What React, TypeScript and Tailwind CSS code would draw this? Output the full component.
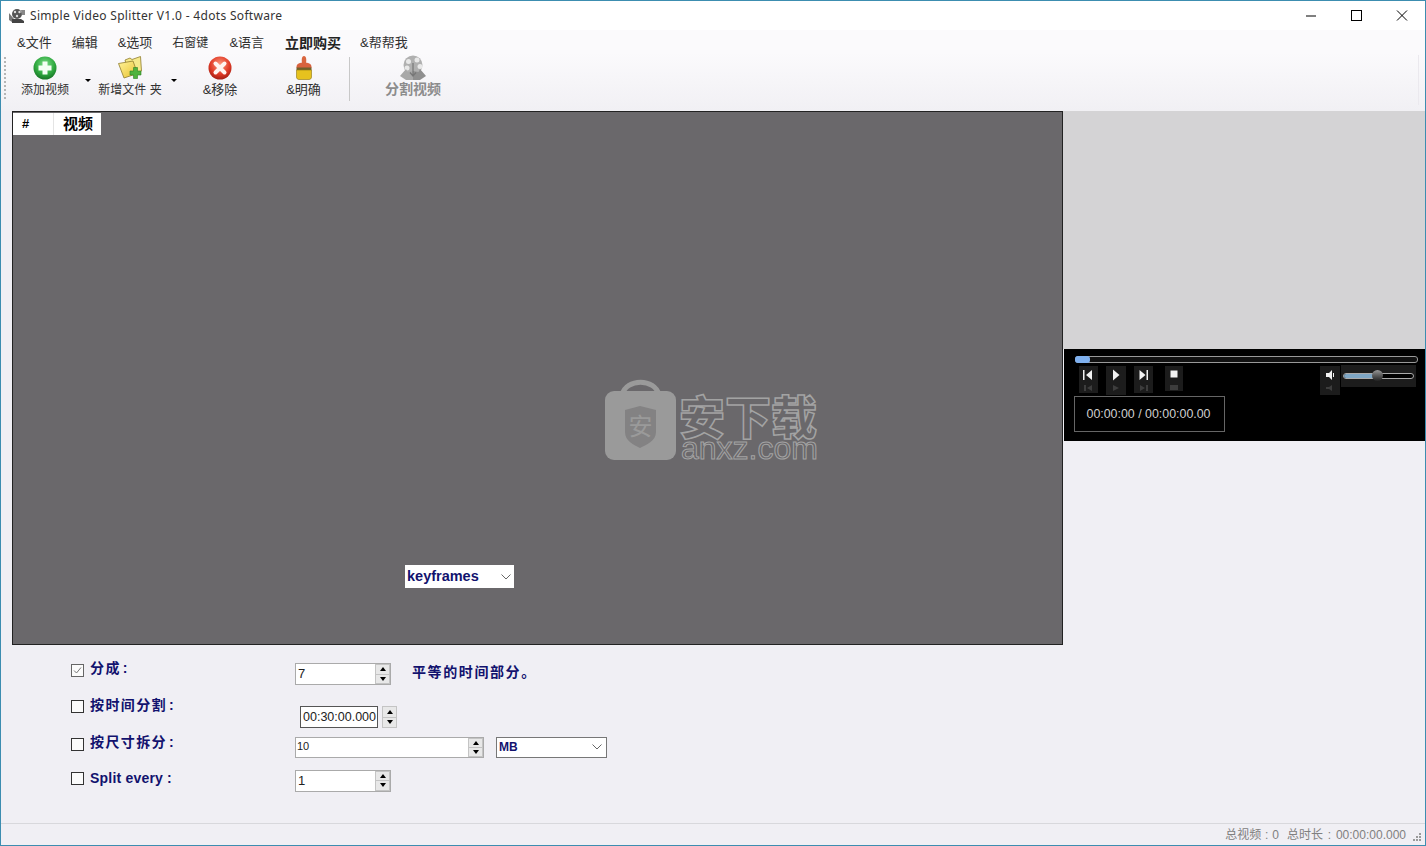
import React from "react";

const cjk = "font-['Liberation_Sans','Noto_Sans_CJK_SC',sans-serif]";

function AddIcon() {
  return (
    <svg width="26" height="26" viewBox="0 0 26 26">
      <defs>
        <radialGradient id="g1" cx="0.5" cy="0.35" r="0.7">
          <stop offset="0" stopColor="#7fe08a" />
          <stop offset="0.6" stopColor="#2fa83f" />
          <stop offset="1" stopColor="#146b22" />
        </radialGradient>
      </defs>
      <circle cx="13" cy="13" r="11.5" fill="url(#g1)" />
      <path d="M10.500 6.500h5v4h4v5h-4v4h-5v-4h-4v-5h4z" fill="#f4fff4" />
    </svg>
  );
}

function FolderIcon() {
  return (
    <svg width="26" height="26" viewBox="0 0 26 26">
      <defs>
        <linearGradient id="g2" x1="0" y1="0" x2="1" y2="1">
          <stop offset="0" stopColor="#fff39a" />
          <stop offset="1" stopColor="#e8c02c" />
        </linearGradient>
      </defs>
      <path d="M8 5 L13 3 L15 4.500 L23.500 1.500 L24.500 16 L12 20z" fill="#f6e98a" stroke="#8f7c2e" strokeWidth="0.8" />
      <path d="M1.500 8.500 L16 6 L20.500 18.500 L7 23z" fill="url(#g2)" stroke="#8f7c2e" strokeWidth="0.8" />
      <path d="M16.500 12.500h4v3.500h3.500v4h-3.500v3.500h-4V20H13v-4h3.500z" fill="#4fb33d" stroke="#2d7f24" strokeWidth="0.6" />
    </svg>
  );
}

function RemoveIcon() {
  return (
    <svg width="26" height="26" viewBox="0 0 26 26">
      <defs>
        <radialGradient id="g3" cx="0.5" cy="0.35" r="0.7">
          <stop offset="0" stopColor="#ff9c80" />
          <stop offset="0.6" stopColor="#e03a26" />
          <stop offset="1" stopColor="#98180f" />
        </radialGradient>
      </defs>
      <circle cx="13" cy="13" r="11.5" fill="url(#g3)" />
      <path d="M8.500 8.500 L17.500 17.500 M17.500 8.500 L8.500 17.500" stroke="#fff3ef" strokeWidth="4" strokeLinecap="round" />
    </svg>
  );
}

function BrushIcon() {
  return (
    <svg width="26" height="26" viewBox="0 0 26 26">
      <path d="M11 8 C10.500 5 10.500 1 13 1 C15.500 1 15.500 5 15 8z" fill="#d9663f" />
      <path d="M5.500 12 C5.500 8.500 9 7.500 13 7.500 C17 7.500 20.500 8.500 20.500 12 V13 H5.500z" fill="#d8623e" />
      <rect x="5.500" y="12.500" width="15" height="2.500" fill="#6f5f2a" />
      <path d="M5.500 15h15v7c0 1.500-1 2.500-2.500 2.500H8c-1.500 0-2.500-1-2.500-2.500z" fill="#e6c21e" stroke="#8f7510" strokeWidth="0.6" />
    </svg>
  );
}

function SplitIcon() {
  return (
    <svg width="28" height="26" viewBox="0 0 28 26">
      <circle cx="14" cy="10" r="9.500" fill="#b0b0b0" />
      <circle cx="9.500" cy="6.500" r="2.500" fill="#e8e8e8" />
      <circle cx="18" cy="5" r="2.500" fill="#e8e8e8" />
      <circle cx="21" cy="11.500" r="2.500" fill="#e8e8e8" />
      <circle cx="8" cy="13" r="2.500" fill="#e8e8e8" />
      <path d="M1 21 L7 14 L8.500 17 L14 16 V25 H7z" fill="#a8a8a8" />
      <path d="M27 21 L21 14 L19.500 17 L14 16 V25 H21z" fill="#8f8f8f" />
      <path d="M14 8v13M11 17.500L14 21l3-3.500" fill="none" stroke="#777" strokeWidth="1.200" />
    </svg>
  );
}

function Caret() {
  return <div className="w-0 h-0 border-x-[3px] border-x-transparent border-t-[3px] border-t-black" />;
}

function ToolButton({ w, icon, label, cls }: { w: string; icon: React.ReactNode; label: string; cls?: string }) {
  return (
    <div className={`${w} h-full flex flex-col items-center shrink-0`}>
      <div className="h-[28px] mt-[1px] flex items-center justify-center">{icon}</div>
      <div className={`leading-[16px] whitespace-nowrap ${cls ?? "text-[12px] text-[#303030]"}`}>{label}</div>
    </div>
  );
}

function Spin() {
  return (
    <div className="w-[15px] h-full flex flex-col shrink-0 gap-[1px] p-[1px] bg-[#c4c4c4]">
      <div className="flex-1 bg-[#e8e8e8] flex items-center justify-center">
        <div className="w-0 h-0 border-x-[3.5px] border-x-transparent border-b-[4px] border-b-black" />
      </div>
      <div className="flex-1 bg-[#e8e8e8] flex items-center justify-center">
        <div className="w-0 h-0 border-x-[3.5px] border-x-transparent border-t-[4px] border-t-black" />
      </div>
    </div>
  );
}

function Check({ on }: { on?: boolean }) {
  return (
    <div className={`w-[13px] h-[13px] border shrink-0 bg-[#fbfbfb] flex items-center justify-center ${on ? "border-[#666]" : "border-[#333]"}`}>
      {on && (
        <svg width="11" height="11" viewBox="0 0 11 11">
          <path d="M2 5.500 L4.500 8 L9 2.500" fill="none" stroke="#777" strokeWidth="1" />
        </svg>
      )}
    </div>
  );
}

function Label({ children, latin, cls }: { children: React.ReactNode; latin?: boolean; cls?: string }) {
  return (
    <div
      className={`w-[211px] pl-[6px] font-bold text-[#12126e] whitespace-pre ${latin ? "text-[14px] tracking-[0.200px]" : "text-[14px] tracking-[1.400px]"} ${cls ?? ""}`}
    >
      {children}
    </div>
  );
}

function PlayerBtn({ w, h, ml, children }: { w: string; h: string; ml: string; children: React.ReactNode }) {
  return (
    <div className={`${w} ${h} ${ml} bg-[#1c1c1c] flex flex-col items-center pt-[3px] gap-[4px] shrink-0`}>{children}</div>
  );
}

function Glyph({ d }: { d: string }) {
  return (
    <svg width="12" height="12" viewBox="0 0 12 12">
      <path d={d} fill="#f2f2f2" />
    </svg>
  );
}

const PREV = "M0 1h1.500v10H0z M9 1v10L3 6z";
const PLAY = "M3 0.500 L9.500 6 L3 11.500z";
const NEXT = "M1.500 1v10l6-5z M8.500 1h1.500v10H8.500z";
const STOP = "M2.500 1.500h7v7h-7z";
const MUTE = "M2 4h3l3-3v10L5 8H2z M9 4h1v4H9z";

export default function App() {
  return (
    <div className={`w-[1426px] h-[846px] overflow-hidden flex flex-col border border-[#3c8db0] bg-[#f0eff4] ${cjk}`}>
      {/* title bar */}
      <div className="h-[29px] shrink-0 bg-white flex items-center">
        <svg width="18" height="16" viewBox="0 0 18 16" className="ml-[7px] shrink-0">
          <circle cx="9" cy="6" r="5" fill="#555" />
          <circle cx="7" cy="4" r="1.200" fill="#ddd" />
          <circle cx="11.500" cy="4" r="1.200" fill="#ddd" />
          <circle cx="9" cy="8" r="1.200" fill="#ddd" />
          <path d="M1 5l5 6-2 3-3-2z" fill="#777" />
          <path d="M4 11h9l3 2v2H4z" fill="#444" />
          <path d="M13 2h4v5h-3z" fill="#888" />
        </svg>
        <div className="ml-[4px] text-[12px] tracking-[0.320px] text-[#333] font-['Noto_Sans',sans-serif] whitespace-nowrap">
          Simple Video Splitter V1.0 - 4dots Software
        </div>
        <div className="ml-auto flex items-center h-full">
          <svg width="46" height="29" viewBox="0 0 46 29">
            <path d="M18 15h10" stroke="#000" strokeWidth="1" />
          </svg>
          <svg width="46" height="29" viewBox="0 0 46 29">
            <rect x="17.500" y="9.500" width="10" height="10" fill="none" stroke="#000" strokeWidth="1" />
          </svg>
          <svg width="45" height="29" viewBox="0 0 45 29">
            <path d="M17 9.500 L27 19.500 M27 9.500 L17 19.500" stroke="#000" strokeWidth="1" />
          </svg>
        </div>
      </div>

      {/* menu bar */}
      <div className="h-[23px] shrink-0 bg-[#fbfafc] flex items-center pt-[3px] pl-[16px] gap-[20px] text-[13px] text-[#303030] whitespace-nowrap">
        <span>&amp;文件</span>
        <span>编辑</span>
        <span>&amp;选项</span>
        <span className="text-[12px]">右窗键</span>
        <span className="ml-[1px]">&amp;语言</span>
        <span className="ml-[1px] text-[14px] font-bold text-[#222]">立即购买</span>
        <span className="-ml-[1px]">&amp;帮帮我</span>
      </div>

      {/* toolbar */}
      <div className="h-[58px] shrink-0 bg-gradient-to-b from-[#fbfafc] to-[#f1f0f4] flex items-start relative">
        <div className="w-[7px] h-full pt-[4px] pl-[3px] shrink-0">
          <div className="h-[42px] border-l-2 border-dotted border-[#b5b5b5]" />
        </div>
        <ToolButton w="w-[74px]" icon={<AddIcon />} label="添加视频" />
        <div className="w-[14px] pt-[26px] pl-[3px] shrink-0">
          <Caret />
        </div>
        <ToolButton w="w-[68px]" icon={<FolderIcon />} label="新增文件 夹" />
        <div className="w-[20px] pt-[26px] pl-[7px] shrink-0">
          <Caret />
        </div>
        <ToolButton w="w-[72px]" icon={<RemoveIcon />} label="&移除" cls="text-[13px] text-[#303030]" />
        <ToolButton w="w-[93px] pl-[2px]" icon={<BrushIcon />} label="&明确" cls="text-[13px] text-[#303030]" />
        <div className="w-[1px] h-[44px] mt-[4px] bg-[#c8c8c8] shrink-0" />
        <ToolButton w="w-[126px]" icon={<SplitIcon />} label="分割视频" cls="-mt-[1px] text-[14px] font-bold text-[#8c8c8c]" />
        <div className="ml-auto mr-[6px] mt-[2px] w-[1px] h-[50px] bg-[#ebe9ee]" />
      </div>

      {/* main */}
      <div className="h-[534px] shrink-0 flex pl-[11px]">
        <div className="relative w-[1051px] h-full bg-[#6a686b] border border-[#222] shrink-0">
          <div className="w-[88px] h-[22px] mt-[1px] bg-white flex items-center text-black font-bold">
            <div className="w-[41px] h-full pl-[9px] flex items-center text-[13px] border-r border-[#e4e4e4]">#</div>
            <div className="flex-1 pl-[9px] text-[15px]">视频</div>
          </div>

          {/* watermark */}
          <div className="absolute left-[591px] top-[267px] flex">
            <svg width="73" height="82" viewBox="0 0 73 82">
              <path d="M18 16 C22 -1 51 -1 55 16" fill="none" stroke="#9a9a9a" strokeWidth="5" />
              <rect x="1" y="12" width="71" height="69" rx="9" fill="#9a9a9a" />
              <path d="M21 31 L36 27 L52 31 V53 C52 62 42 66 36 69 C30 66 21 62 21 53z" fill="#838283" />
              <text x="36.500" y="56" textAnchor="middle" fontSize="24" fill="#9a9a9a" fontFamily="'Noto Sans CJK SC',sans-serif">安</text>
            </svg>
            <div className="ml-[2px] w-[145px] flex flex-col items-start font-bold">
              <div className="text-[46px] leading-[46px] mt-[12px] whitespace-nowrap font-black text-transparent [-webkit-text-stroke:1.500px_#a3a3a3] font-['Noto_Sans_CJK_SC',sans-serif]">
                安下载
              </div>
              <div className="text-[32px] leading-[22px] ml-[2px] whitespace-nowrap font-normal text-transparent [-webkit-text-stroke:1px_#a3a3a3] font-['Liberation_Sans',sans-serif]">
                anxz.com
              </div>
            </div>
          </div>

          {/* keyframes */}
          <div className="absolute left-[392px] top-[453px] w-[109px] h-[23px] bg-white flex items-center pl-[2px] text-[14.500px] font-bold text-[#12126e]">
            keyframes
            <svg width="10" height="6" viewBox="0 0 10 6" className="ml-auto mr-[3px]">
              <path d="M0.500 0.500 L5 5 L9.500 0.500" fill="none" stroke="#666" strokeWidth="1" />
            </svg>
          </div>
        </div>

        {/* right column */}
        <div className="flex-1 pl-[1px] flex flex-col">
          <div className="h-[238px] bg-[#d4d3d5] -ml-[1px]" />
          <div className="h-[92px] bg-black pl-[11px] pt-[7px]">
            <div className="relative w-[343px] h-[7px] bg-[#111] border border-[#999] rounded-[3px]">
              <div className="absolute -left-[1px] -top-[1px] w-[15px] h-[7px] rounded-[3px] bg-[#7fb0ee]" />
            </div>
            <div className="flex h-[30px] mt-[3px]">
              <PlayerBtn w="w-[19px]" h="h-[27px]" ml="ml-[4px]">
                <Glyph d={PREV} />
                <svg width="12" height="6" viewBox="0 0 12 6"><path d="M1 0h2v6H1z M9 0v6L4 3z" fill="#3d3d3d" /></svg>
              </PlayerBtn>
              <PlayerBtn w="w-[20px]" h="h-[29px]" ml="ml-[8px]">
                <Glyph d={PLAY} />
                <svg width="12" height="6" viewBox="0 0 12 6"><path d="M3 0L9 3L3 6z" fill="#3d3d3d" /></svg>
              </PlayerBtn>
              <PlayerBtn w="w-[19px]" h="h-[27px]" ml="ml-[8px]">
                <Glyph d={NEXT} />
                <svg width="12" height="6" viewBox="0 0 12 6"><path d="M2 0v6l5-3z M8 0h2v6H8z" fill="#3d3d3d" /></svg>
              </PlayerBtn>
              <PlayerBtn w="w-[18px]" h="h-[25px]" ml="ml-[12px]">
                <Glyph d={STOP} />
                <svg width="10" height="5" viewBox="0 0 10 5"><path d="M1 0h8v5H1z" fill="#3d3d3d" /></svg>
              </PlayerBtn>
              <PlayerBtn w="w-[20px]" h="h-[29px]" ml="ml-[137px]">
                <Glyph d={MUTE} />
                <svg width="12" height="6" viewBox="0 0 12 6"><path d="M2 2h3l3-2v6L5 4H2z" fill="#3d3d3d" /></svg>
              </PlayerBtn>
              <div className="relative w-[75px] h-[22px] -mt-[1px] ml-[1px] bg-[#1c1c1c] flex items-center justify-center shrink-0">
                <div className="w-[71px] h-[6px] rounded-[3px] border border-[#aaa] bg-black overflow-hidden">
                  <div className="w-[31px] h-full bg-[#7ea6c4]" />
                </div>
                <div className="absolute left-[31px] top-[5px] w-[11px] h-[11px] rounded-full bg-gradient-to-b from-[#999] to-[#222]" />
              </div>
            </div>
            <div className="w-[151px] h-[36px] -ml-[1px] pt-[1px] pr-[2px] border border-[#666] flex items-center justify-center text-[12.400px] text-[#d0d0d0]">
              00:00:00 / 00:00:00.00
            </div>
          </div>
        </div>
      </div>

      {/* form */}
      <div className="flex-1 pl-[70px] flex flex-col">
        <div className="h-[37px] pt-[14px] flex items-center">
          <Check on />
          <Label cls="-mt-[4px]">分成<span className="ml-[2px]">:</span></Label>
          <div className="w-[96px] h-[22px] mt-[7px] bg-white border border-[#aaa] flex text-[13px] text-[#222] leading-[20px]">
            <div className="flex-1 pl-[2px]">7</div>
            <Spin />
          </div>
          <div className="ml-[21px] mt-[4px] text-[14px] font-bold text-[#12126e] tracking-[1.600px] whitespace-nowrap">平等的时间部分。</div>
        </div>
        <div className="h-[37px] mt-[6px] flex items-center">
          <Check />
          <Label cls="-mt-[2px]">按时间分割<span className="ml-[2px]">:</span></Label>
          <div className="ml-[5px] mt-[21px] flex h-[22px]">
            <div className="w-[78px] bg-white border border-[#555] pl-[2px] text-[12.500px] text-[#222] leading-[20px]">00:30:00.000</div>
            <div className="ml-[4px] h-full">
              <Spin />
            </div>
          </div>
        </div>
        <div className="h-[37px] mt-[1px] flex items-center">
          <Check />
          <Label cls="-mt-[4px]">按尺寸拆分<span className="ml-[2px]">:</span></Label>
          <div className="w-[189px] h-[21px] mt-[5px] bg-white border border-[#aaa] flex text-[11px] text-[#222] leading-[17px]">
            <div className="flex-1 pl-[1px]">10</div>
            <Spin />
          </div>
          <div className="ml-[12px] mt-[5px] w-[111px] h-[21px] bg-white border border-[#777] flex items-center pl-[2px] text-[12px] font-bold text-[#12126e]">
            MB
            <svg width="10" height="6" viewBox="0 0 10 6" className="ml-auto mr-[4px]">
              <path d="M0.500 0.500 L5 5 L9.500 0.500" fill="none" stroke="#666" strokeWidth="1" />
            </svg>
          </div>
        </div>
        <div className="h-[35px] -mt-[2px] flex items-center">
          <Check />
          <Label latin>Split every :</Label>
          <div className="w-[96px] h-[22px] bg-white border border-[#aaa] flex text-[13px] text-[#222] leading-[20px] mt-[4px]">
            <div className="flex-1 pl-[2px]">1</div>
            <Spin />
          </div>
        </div>
      </div>

      {/* status bar */}
      <div className="h-[22px] shrink-0 border-t border-[#d8d8dc] flex items-center justify-end text-[12px] text-[#808080] whitespace-nowrap">
        <span className="[word-spacing:0.500px]">总视频 : 0</span>
        <span className="ml-[8px] [word-spacing:1.500px]">总时长 : 00:00:00.000</span>
        <svg width="10" height="10" viewBox="0 0 10 10" className="ml-[6px] mr-[3px] mt-[4px]">
          <path d="M7 1h2v2H7z M4 4h2v2H4z M7 4h2v2H7z M1 7h2v2H1z M4 7h2v2H4z M7 7h2v2H7z" fill="#9a9a9a" />
        </svg>
      </div>
    </div>
  );
}
